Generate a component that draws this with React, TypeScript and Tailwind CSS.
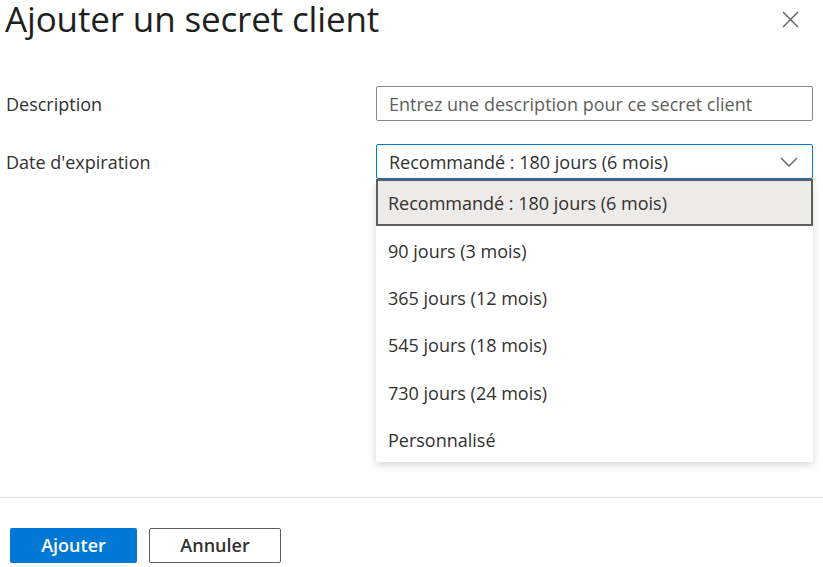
import React from "react";

const items = [
  "90 jours (3 mois)",
  "365 jours (12 mois)",
  "545 jours (18 mois)",
  "730 jours (24 mois)",
  "Personnalisé",
];

export default function App() {
  return (
    <div
      className="w-[823px] h-[567px] bg-white text-[#323130] overflow-hidden relative"
      style={{ fontFamily: '"Open Sans", "Noto Sans", sans-serif' }}
    >
      <div className="flex items-start justify-between pl-[5px] pr-[24px] pt-0 h-[86px]">
        <h1 className="text-[35px] leading-[37px] font-normal text-[#201f1e] tracking-[-0.15px]">
          Ajouter un secret client
        </h1>
        <svg width="17" height="17" viewBox="0 0 17 17" className="mt-[11px]">
          <path d="M1 1 L16 16 M16 1 L1 16" stroke="#605e5c" strokeWidth="1.4" />
        </svg>
      </div>

      <div className="flex items-center h-[35px] pl-[6px] pr-[10px]">
        <div className="w-[370px] text-[18px] pt-[2px]">Description</div>
        <div className="flex-1 h-[35px] border border-[#8a8886] rounded-[2px] flex items-center px-[12px] pt-[2px] text-[18px] text-[#605e5c]">
          Entrez une description pour ce secret client
        </div>
      </div>

      <div className="flex items-start mt-[23px] pl-[6px] pr-[10px]">
        <div className="w-[370px] text-[18px] h-[35px] pt-[2px] flex items-center">Date d'expiration</div>
        <div className="flex-1 relative">
          <div className="h-[35px] border border-[#0078d4] rounded-[2px] flex items-center justify-between pl-[12px] pr-[14px] text-[18px]">
            <span className="pt-[2px]">Recommandé : 180 jours (6 mois)</span>
            <svg width="18" height="10" viewBox="0 0 18 10">
              <path d="M1 1 L9 9 L17 1" stroke="#605e5c" strokeWidth="1.3" fill="none" />
            </svg>
          </div>
          <div className="absolute left-0 right-0 top-[35px] bg-white shadow-[0_3px_8px_rgba(0,0,0,0.16)] rounded-b-[2px]">
            <div className="h-[47px] border-2 border-[#605e5c] bg-[#edebe9] flex items-center px-[10px] pt-[2px] text-[18px]">
              Recommandé : 180 jours (6 mois)
            </div>
            {items.map((t) => (
              <div key={t} className="h-[47.3px] flex items-center px-[12px] pt-[3px] text-[18px]">
                {t}
              </div>
            ))}
          </div>
        </div>
      </div>

      <div className="absolute left-0 right-0 top-[497px] border-t border-[#e1dfdd]" />

      <div className="absolute left-[10px] top-[528px] flex gap-[12px]">
        <button className="w-[127px] h-[35px] bg-[#0078d4] rounded-[2px] text-white font-semibold text-[18px]">
          Ajouter
        </button>
        <button className="w-[132px] h-[35px] border border-[#605e5c] rounded-[2px] bg-white text-[#323130] font-semibold text-[18px]">
          Annuler
        </button>
      </div>
    </div>
  );
}
